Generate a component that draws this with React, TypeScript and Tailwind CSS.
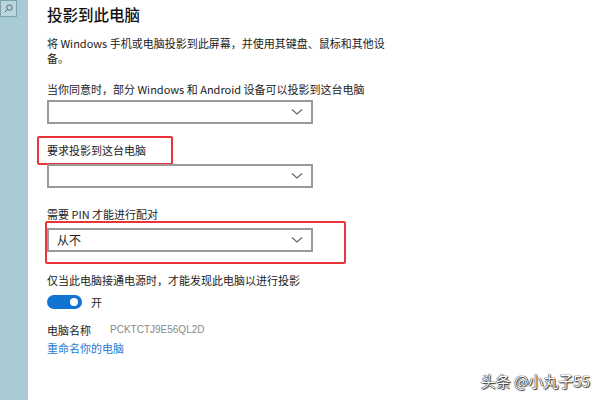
import React from "react";

const font = { fontFamily: '"Noto Sans CJK SC", "Noto Sans", sans-serif' };

function Chevron() {
  return (
    <svg width="12" height="8" viewBox="0 0 12 8" className="mr-[8px]">
      <path d="M1 1.5 L6 6 L11 1.5" fill="none" stroke="#666" strokeWidth="1.1" />
    </svg>
  );
}

function Dropdown({ value }: { value?: string }) {
  return (
    <div className="w-[266px] h-[24px] border-2 border-[#9a9a9a] bg-white flex items-center justify-between">
      <span className="pl-[8px] text-[12px] text-[#222] leading-none">{value ?? ""}</span>
      <Chevron />
    </div>
  );
}

export default function App() {
  return (
    <div className="w-[600px] h-[400px] bg-white flex overflow-hidden relative" style={font}>
      <div className="w-[28px] h-full bg-[#a9ccd4] relative shrink-0">
        <div className="w-[17px] h-[17px] border border-[#7fa3ad] bg-[#b8d6dd] flex items-center justify-center">
          <svg width="9" height="9" viewBox="0 0 10 10">
            <circle cx="6" cy="4" r="3" fill="none" stroke="#555" strokeWidth="1" />
            <path d="M4 6 L1 9" stroke="#555" strokeWidth="1" />
          </svg>
        </div>
      </div>
      <div className="flex-1 pl-[19px] pt-[2px] text-[#222]">
        <div className="text-[15.5px] leading-[24px] text-[#111] font-medium">投影到此电脑</div>
        <div className="mt-[10px] w-[340px] text-[11px] leading-[15px] text-[#222]">
          将 Windows 手机或电脑投影到此屏幕，并使用其键盘、鼠标和其他设备。
        </div>
        <div className="mt-[16px] text-[11px] leading-[14px]">当你同意时，部分 Windows 和 Android 设备可以投影到这台电脑</div>
        <div className="mt-[4px]">
          <Dropdown />
        </div>
        <div className="mt-[12px] -ml-[10px] w-[136px] h-[29px] border-2 border-[#e8343a] rounded-[2px] flex items-center pl-[8px]">
          <span className="text-[11px] leading-none">要求投影到这台电脑</span>
        </div>
        <div className="mt-[-1px]">
          <Dropdown />
        </div>
        <div className="mt-[19px] text-[11px] leading-[14px]">需要 PIN 才能进行配对</div>
        <div className="-ml-[2px] w-[301px] h-[43px] border-2 border-[#e8343a] rounded-[2px] pt-[5px]">
          <Dropdown value="从不" />
        </div>
        <div className="mt-[9px] text-[11px] leading-[14px]">仅当此电脑接通电源时，才能发现此电脑以进行投影</div>
        <div className="mt-[7px] flex items-center gap-[9px]">
          <div className="w-[35px] h-[14px] rounded-full bg-[#1273d3] flex items-center justify-end pr-[4px]">
            <div className="w-[8px] h-[8px] rounded-full bg-white" />
          </div>
          <span className="text-[11px]">开</span>
        </div>
        <div className="mt-[12px] flex items-center text-[11px] leading-[14px]">
          <span className="w-[63px]">电脑名称</span>
          <span className="text-[#888] text-[10px]" style={{ fontFamily: '"Liberation Sans", sans-serif' }}>PCKTCTJ9E56QL2D</span>
        </div>
        <div className="mt-[4px] text-[11px] leading-[14px] text-[#2a79d4]">重命名你的电脑</div>
      </div>
      <div
        className="absolute right-[10px] bottom-[9px] text-[15px] leading-[20px] text-white"
        style={{ textShadow: "0 0 1px #000, 0 0 1px #000, 1px 1px 1px #444", fontFamily: '"Noto Sans CJK SC", sans-serif' }}
      >
        头条 @小丸子55
      </div>
    </div>
  );
}
